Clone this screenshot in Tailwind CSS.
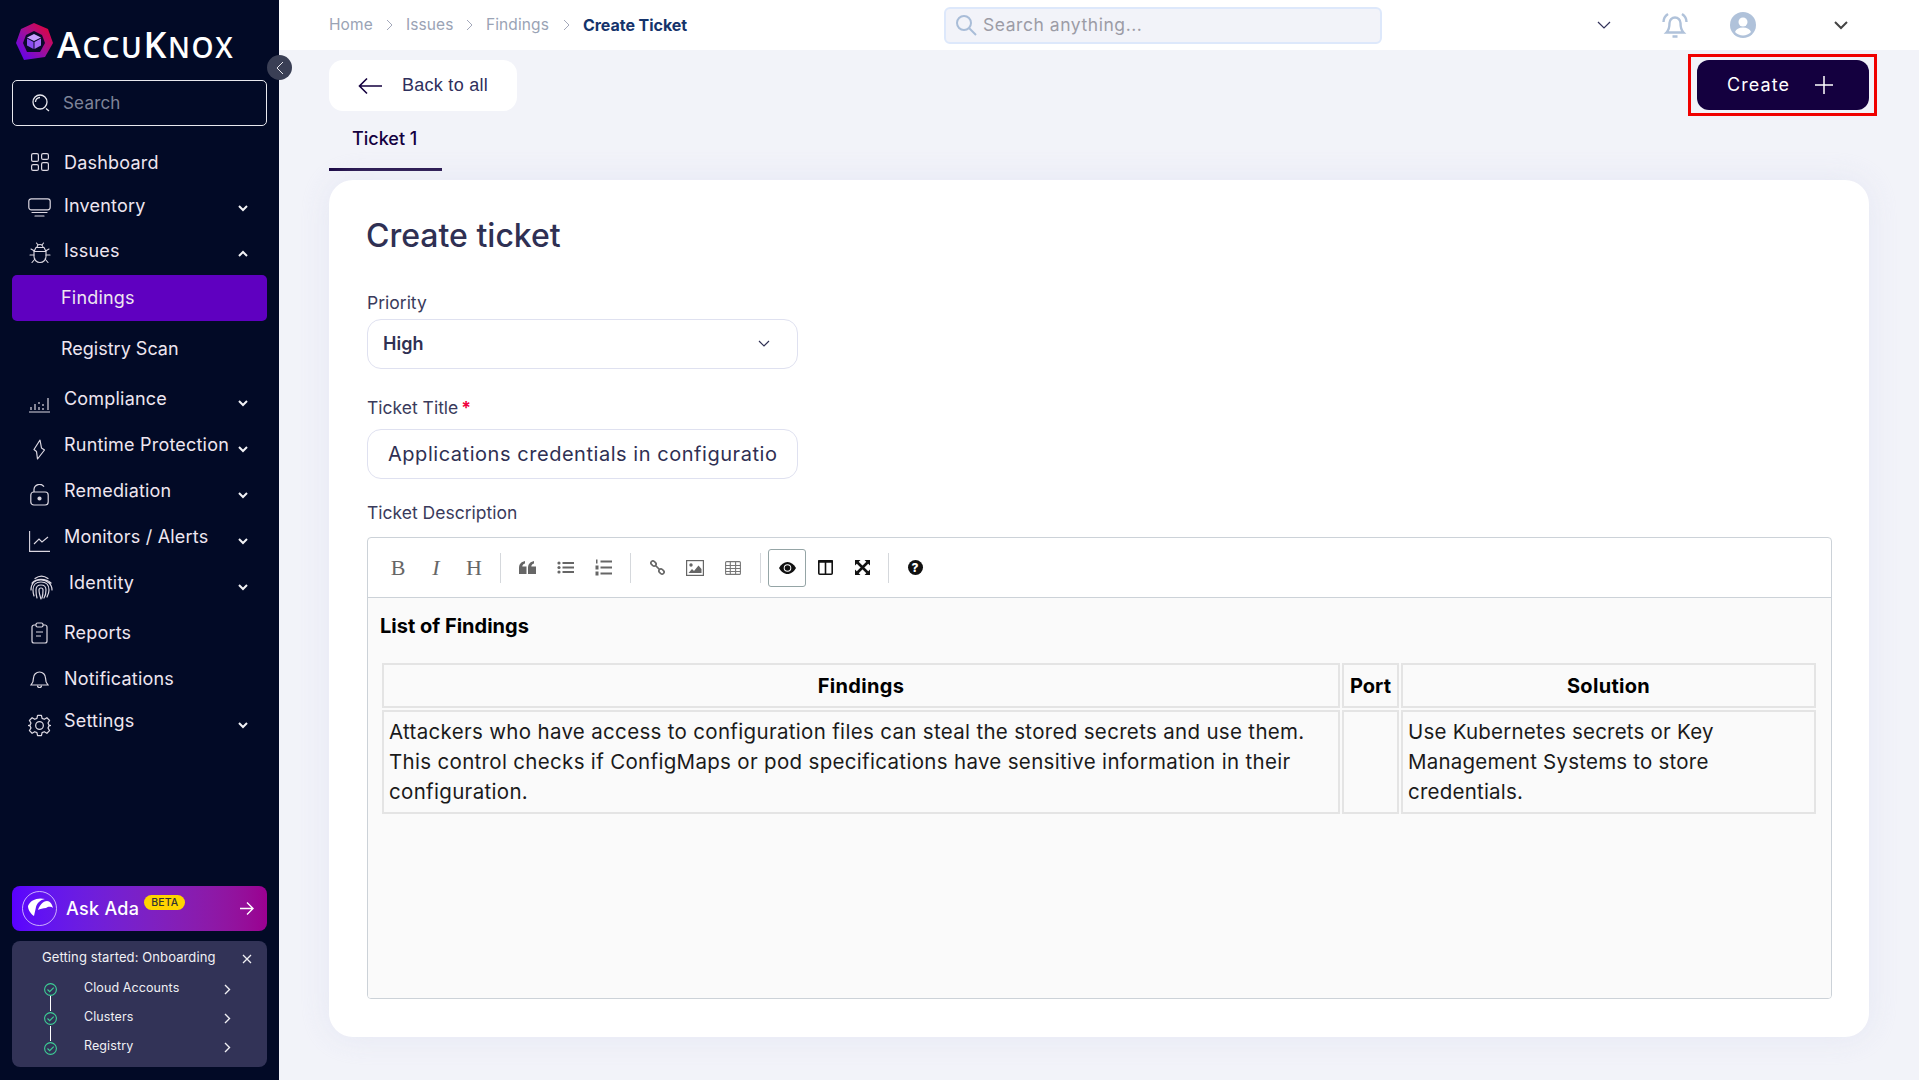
<!DOCTYPE html>
<html lang="en">
<head>
    <meta charset="UTF-8">
    <meta name="viewport" content="width=device-width, initial-scale=1.0">
    <script src="https://cdn.jsdelivr.net/npm/@tailwindcss/browser@4"></script>
    <title>Create Ticket</title>
</head>
<body class="font-['Inter',sans-serif] bg-[#f2f3f9]">
<div class="flex w-[1919px] h-[1080px] overflow-hidden relative">

    <!--sidebar-->
    <aside class="w-[279px] shrink-0 bg-[#020a26] flex flex-col px-[12px] pb-[13px] text-[#eee6f0] text-[18px] tracking-[0.2px]">
        <div class="h-[80px] flex items-start pt-[23px] pl-[3px] gap-[4px]">
            <svg width="38" height="38" viewBox="0 0 38 38">
                <defs>
                    <linearGradient id="ring" x1="1" y1="0" x2="0" y2="1">
                        <stop offset="0" stop-color="#f00020"/>
                        <stop offset="0.5" stop-color="#a0109a"/>
                        <stop offset="1" stop-color="#5200ff"/>
                    </linearGradient>
                </defs>
                <path d="M19 0L33 6L38 20L30 34L9 37L1 20L6 6Z" fill="url(#ring)"/>
                <path d="M19 8L27 12L30 20L25 29L12 29L8 20L11 12Z" fill="#0a0a2a"/>
                <path d="M19 11L26 14.500L19 18L12 14.500Z" fill="#c9a0ff"/>
                <path d="M12 15.500L18.500 19V26L12 22.500Z" fill="#8a4cf0"/>
                <path d="M26 15.500L19.500 19V26L26 22.500Z" fill="#a56cf5"/>
            </svg>
            <div class="text-white font-['Open_Sans',sans-serif] font-semibold tracking-[1.6px] leading-none mt-[4px] text-[28px] whitespace-nowrap"><span class="text-[36px]">A</span>CCU<span class="text-[36px]">K</span>NOX</div>
        </div>

        <div class="h-[46px] border border-[#e8e8ee] rounded-[5px] flex items-center pl-[18px] gap-[12px] shrink-0">
            <svg width="20" height="20" viewBox="0 0 20 20" fill="none" stroke="#e8e8ee" stroke-width="1.300"><circle cx="9" cy="9" r="7"/><path d="M4.500 9a4.500 4.500 0 0 1 4.500-4.500M15 15.500l3 2.500"/></svg>
            <span class="text-[#7f8499] text-[17px] pt-[1px]">Search</span>
        </div>

        <nav class="mt-[13px] flex flex-col">
            <a class="h-[46px] flex items-center">
                <span class="w-[52px] flex justify-center pl-[3px]">
                    <svg width="18" height="18" viewBox="0 0 18 18" fill="none" stroke="#dcd8e2" stroke-width="1.200"><rect x="0.600" y="0.600" width="6.800" height="7.800" rx="1.500"/><rect x="10.600" y="0.600" width="6.800" height="5.800" rx="1.500"/><rect x="0.600" y="11.600" width="6.800" height="5.800" rx="1.500"/><rect x="10.600" y="9.600" width="6.800" height="7.800" rx="1.500"/></svg>
                </span>
                <span>Dashboard</span>
            </a>
            <a class="h-[46px] flex items-center">
                <span class="w-[52px] flex justify-center pl-[3px]">
                    <svg width="23" height="20" viewBox="0 0 23 20" fill="none" stroke="#dcd8e2" stroke-width="1.200" stroke-linecap="round"><rect x="0.800" y="0.800" width="21.400" height="11" rx="2.500"/><path d="M4 14.500h15M7 18h9"/></svg>
                </span>
                <span class="pb-[6px]">Inventory</span>
                <svg class="ml-auto mr-[19px]" width="10" height="7" viewBox="0 0 10 7" fill="none" stroke="#f2f2f5" stroke-width="2"><path d="M1 1l4 4 4-4"/></svg>
            </a>
            <a class="h-[44px] flex items-center">
                <span class="w-[52px] flex justify-center pl-[3px]">
                    <svg width="22" height="22" viewBox="0 0 22 22" fill="none" stroke="#dcd8e2" stroke-width="1.100" stroke-linecap="round"><path d="M7 5.500h8l2 4v5a6 6 0 0 1-12 0v-5z"/><path d="M8 5.500a3 3 0 0 1 6 0M7.500 1l1.500 2M14.500 1L13 3M5.200 9.500h11.600M5 13H1M17 13h4M5.500 9L2 7M16.500 9L20 7M6 17l-3 3.500M16 17l3 3.500"/></svg>
                </span>
                <span class="pb-[6px]">Issues</span>
                <svg class="ml-auto mr-[19px]" width="10" height="7" viewBox="0 0 10 7" fill="none" stroke="#f2f2f5" stroke-width="2"><path d="M1 6l4-4 4 4"/></svg>
            </a>
            <a class="h-[46px] flex items-center bg-[#5f00c0] rounded-[5px] pl-[49px] pb-[2px]">Findings</a>
            <a class="h-[46px] mt-[4px] flex items-center pl-[49px] tracking-[0px]">Registry Scan</a>
            <a class="h-[46px] mt-[9px] flex items-center">
                <span class="w-[52px] flex justify-center pl-[3px]">
                    <svg width="21" height="20" viewBox="0 0 21 20" fill="none" stroke="#dcd8e2" stroke-width="1.200"><path d="M0 19h21M2 14v3M6 11v6M10 9v2M10 14v3M14 11v2M14 15v2M19 5v12"/></svg>
                </span>
                <span class="pb-[9px]">Compliance</span>
                <svg class="ml-auto mr-[19px]" width="10" height="7" viewBox="0 0 10 7" fill="none" stroke="#f2f2f5" stroke-width="2"><path d="M1 1l4 4 4-4"/></svg>
            </a>
            <a class="h-[46px] flex items-center">
                <span class="w-[52px] flex justify-center pl-[3px]">
                    <svg width="13" height="21" viewBox="0 0 13 21" fill="none" stroke="#dcd8e2" stroke-width="1.200" stroke-linejoin="round"><path d="M7 1L1 10.500l2.500 2 1 7.500 7-9-3-2z"/></svg>
                </span>
                <span class="pb-[9px]">Runtime Protection</span>
                <svg class="ml-auto mr-[19px]" width="10" height="7" viewBox="0 0 10 7" fill="none" stroke="#f2f2f5" stroke-width="2"><path d="M1 1l4 4 4-4"/></svg>
            </a>
            <a class="h-[46px] flex items-center">
                <span class="w-[52px] flex justify-center pl-[3px]">
                    <svg width="19" height="22" viewBox="0 0 19 22" fill="none" stroke="#dcd8e2" stroke-width="1.200"><rect x="0.800" y="8" width="17.400" height="13" rx="3"/><path d="M4 8V5.500a5.500 5.500 0 0 1 10-2.800"/><circle cx="9.500" cy="14.500" r="1.500" fill="#dcd8e2"/></svg>
                </span>
                <span class="pb-[9px]">Remediation</span>
                <svg class="ml-auto mr-[19px]" width="10" height="7" viewBox="0 0 10 7" fill="none" stroke="#f2f2f5" stroke-width="2"><path d="M1 1l4 4 4-4"/></svg>
            </a>
            <a class="h-[46px] flex items-center">
                <span class="w-[52px] flex justify-center pl-[3px]">
                    <svg width="21" height="21" viewBox="0 0 21 21" fill="none" stroke="#dcd8e2" stroke-width="1.100"><path d="M0.600 0v20.400H21M5 13l5-5 3 3 6-5"/></svg>
                </span>
                <span class="pb-[9px]">Monitors / Alerts</span>
                <svg class="ml-auto mr-[19px]" width="10" height="7" viewBox="0 0 10 7" fill="none" stroke="#f2f2f5" stroke-width="2"><path d="M1 1l4 4 4-4"/></svg>
            </a>
            <a class="h-[46px] flex items-center">
                <span class="w-[57px] flex justify-center pl-[2px]">
                    <svg width="23" height="25" viewBox="0 0 23 25" fill="none" stroke="#dcd8e2" stroke-width="1.200" stroke-linecap="round"><path d="M5 3.500C9 .5 14 .5 18 3.500M2 8c4-5 14-5 19 0M1 15c0-7 4-10 10-10s11 4 11 10M4 21c-1-3-1-4-1-6 0-5 3-8 8-8s8 3 8 8c0 3-1 5-2 7M7 23c-1-3-1-5-1-8 0-3 2-5 5-5s5 2 5 5c0 3 0 5-2 8M11 24c-1-3-2-6-2-9 0-1 1-2 2-2s2 1 2 2c0 3 0 5-1 8"/></svg>
                </span>
                <span class="pb-[9px]">Identity</span>
                <svg class="ml-auto mr-[19px]" width="10" height="7" viewBox="0 0 10 7" fill="none" stroke="#f2f2f5" stroke-width="2"><path d="M1 1l4 4 4-4"/></svg>
            </a>
            <a class="h-[46px] flex items-center">
                <span class="w-[52px] flex justify-center pl-[3px]">
                    <svg width="17" height="22" viewBox="0 0 17 22" fill="none" stroke="#dcd8e2" stroke-width="1.200"><path d="M5 3H3a2 2 0 0 0-2 2v14a2 2 0 0 0 2 2h11a2 2 0 0 0 2-2V5a2 2 0 0 0-2-2h-2"/><rect x="5" y="1" width="7" height="4" rx="1.500"/><path d="M5 10h7M5 14h5"/></svg>
                </span>
                <span class="pb-[2px]">Reports</span>
            </a>
            <a class="h-[46px] flex items-center">
                <span class="w-[52px] flex justify-center pl-[3px]">
                    <svg width="19" height="20" viewBox="0 0 19 20" fill="none" stroke="#dcd8e2" stroke-width="1.200"><path d="M1 16c2-2 2.500-4 2.500-7a6 6 0 0 1 12 0c0 3 .5 5 2.500 7z"/><path d="M7.500 16.500a2 2 0 0 0 4 0"/></svg>
                </span>
                <span class="pb-[2px]">Notifications</span>
            </a>
            <a class="h-[46px] flex items-center">
                <span class="w-[52px] flex justify-center pl-[3px]">
                    <svg width="23" height="23" viewBox="0 0 24 24" fill="none" stroke="#dcd8e2" stroke-width="1.300" stroke-linejoin="round"><path d="M10 1.500h4l.7 3 2.300 1 2.700-1.600 2.800 2.800L20.900 9.400l1 2.300 2 .3v0l-2 .3-1 2.300 1.600 2.700-2.800 2.800-2.700-1.600-2.300 1-.7 3h-4l-.7-3-2.300-1-2.700 1.600-2.800-2.800 1.600-2.700-1-2.300-2-.3v0l2-.3 1-2.300L1.500 6.700l2.800-2.800L7 5.500l2.300-1z"/><circle cx="12" cy="12" r="4"/></svg>
                </span>
                <span class="pb-[9px]">Settings</span>
                <svg class="ml-auto mr-[19px]" width="10" height="7" viewBox="0 0 10 7" fill="none" stroke="#f2f2f5" stroke-width="2"><path d="M1 1l4 4 4-4"/></svg>
            </a>
        </nav>

        <div class="mt-auto h-[45px] rounded-[8px] bg-gradient-to-r from-[#5a00ff] to-[#9a0090] flex items-center pl-[10px] pr-[13px] shrink-0">
            <svg width="35" height="35" viewBox="0 0 35 35" fill="none">
                <circle cx="17.500" cy="17.500" r="17" stroke="#e6d8ff" stroke-width="0.800"/>
                <path d="M6 15c2-6 10-9 17-7-5 1-8 4-9 8l-2 9c-3-2-6-6-6-10z" fill="#fff"/>
                <path d="M16 19c1-4 5-9 9-9 3 0 5 3 6 7-3-2-5-1-7 0-3 0-6 1-8 2z" fill="#fff"/>
            </svg>
            <span class="ml-[9px] text-white text-[18px] font-medium tracking-[0.3px]">Ask Ada</span>
            <span class="ml-[5px] -mt-[12px] h-[15px] px-[7px] rounded-full bg-[#ffd400] text-[#333] text-[10.500px] font-medium leading-[15px] tracking-[0.1px]">BETA</span>
            <svg class="ml-auto" width="15" height="15" viewBox="0 0 15 15" fill="none" stroke="#fff" stroke-width="1.400"><path d="M1 7.500h13M8 1.500l6 6-6 6"/></svg>
        </div>

        <div class="mt-[10px] h-[126px] shrink-0 rounded-[8px] bg-[#323357] pl-[30px] pt-[7px] text-[12.500px] tracking-[0.1px] text-[#f0f0f4]">
            <div class="flex items-center h-[20px] pr-[15px]">
                <span class="text-[13px]">Getting started: Onboarding</span>
                <svg class="ml-auto mt-[2px]" width="10" height="10" viewBox="0 0 10 10" stroke="#f0f0f4" stroke-width="1.300"><path d="M1 1l8 8M9 1l-8 8"/></svg>
            </div>
            <div class="mt-[5px]">
                <div class="h-[30px] flex items-center pl-[2px] relative">
                    <svg class="shrink-0 mt-[2px]" width="13" height="13" viewBox="0 0 13 13" fill="none" stroke="#3dcf96" stroke-width="1.100"><circle cx="6.500" cy="6.500" r="5.900"/><path d="M3.500 6.500l2.200 2.200 4-4"/></svg>
                    <span class="ml-[27px]">Cloud Accounts</span>
                    <svg class="ml-auto mr-[36px] mt-[2px]" width="7" height="11" viewBox="0 0 7 11" fill="none" stroke="#f0f0f4" stroke-width="1.400"><path d="M1 1l4.500 4.500L1 10"/></svg>
                    <i class="absolute left-[8px] top-[23px] w-[1px] h-[15px] bg-white"></i>
                </div>
                <div class="h-[29px] flex items-center pl-[2px] relative">
                    <svg class="shrink-0 mt-[2px]" width="13" height="13" viewBox="0 0 13 13" fill="none" stroke="#3dcf96" stroke-width="1.100"><circle cx="6.500" cy="6.500" r="5.900"/><path d="M3.500 6.500l2.200 2.200 4-4"/></svg>
                    <span class="ml-[27px]">Clusters</span>
                    <svg class="ml-auto mr-[36px] mt-[2px]" width="7" height="11" viewBox="0 0 7 11" fill="none" stroke="#f0f0f4" stroke-width="1.400"><path d="M1 1l4.500 4.500L1 10"/></svg>
                    <i class="absolute left-[8px] top-[23px] w-[1px] h-[15px] bg-white"></i>
                </div>
                <div class="h-[29px] flex items-center pl-[2px]">
                    <svg class="shrink-0 mt-[4px]" width="13" height="13" viewBox="0 0 13 13" fill="none" stroke="#3dcf96" stroke-width="1.100"><circle cx="6.500" cy="6.500" r="5.900"/><path d="M3.500 6.500l2.200 2.200 4-4"/></svg>
                    <span class="ml-[27px]">Registry</span>
                    <svg class="ml-auto mr-[36px] mt-[2px]" width="7" height="11" viewBox="0 0 7 11" fill="none" stroke="#f0f0f4" stroke-width="1.400"><path d="M1 1l4.500 4.500L1 10"/></svg>
                </div>
            </div>
        </div>
    </aside>

    <!--tombol collapse-->
    <div class="absolute left-[267px] top-[55px] w-[25px] h-[25px] rounded-full bg-[#3a3f55] flex items-center justify-center">
        <svg width="8" height="14" viewBox="0 0 8 14" fill="none" stroke="#e8e8ee" stroke-width="1"><path d="M7 1L1 7l6 6"/></svg>
    </div>

    <div class="flex-1 flex flex-col">
        <!--header-->
        <header class="h-[50px] shrink-0 bg-white flex items-center">
            <div class="w-[665px] pl-[50px] flex items-center text-[15.500px] text-[#9aa3b5] tracking-[0.1px]">
                <span class="w-[45px]">Home</span>
                <svg class="mx-[12px]" width="8" height="12" viewBox="0 0 8 12" fill="none" stroke="#a3a8ba" stroke-width="1"><path d="M1 1l5 5-5 5"/></svg>
                <span class="w-[48px]">Issues</span>
                <svg class="mx-[12px]" width="8" height="12" viewBox="0 0 8 12" fill="none" stroke="#a3a8ba" stroke-width="1"><path d="M1 1l5 5-5 5"/></svg>
                <span class="w-[65px]">Findings</span>
                <svg class="mx-[12px]" width="8" height="12" viewBox="0 0 8 12" fill="none" stroke="#a3a8ba" stroke-width="1"><path d="M1 1l5 5-5 5"/></svg>
                <span class="font-bold text-[16px] text-[#14336b] -tracking-[0.05px]">Create Ticket</span>
            </div>
            <div class="w-[438px] h-[37px] rounded-[6px] border-2 border-[#dde8fb] bg-[#f2f3f9] flex items-center pl-[9px] gap-[6px]">
                <svg width="22" height="22" viewBox="0 0 22 22" fill="none" stroke="#a9bdd8" stroke-width="2"><circle cx="9" cy="9" r="7"/><path d="M14 14l7 7"/></svg>
                <span class="text-[17.500px] text-[#9c9ca6] tracking-[0.55px]">Search anything...</span>
            </div>
            <svg class="ml-[215px]" width="14" height="8" viewBox="0 0 14 8" fill="none" stroke="#32325a" stroke-width="1.200"><path d="M1 1l6 6 6-6"/></svg>
            <svg class="ml-[51px]" width="26" height="26" viewBox="0 0 26 26" fill="none" stroke="#b0c2da" stroke-width="2.400"><path d="M4.500 20.500c2-2 3-4 3-9.500a5.500 5.500 0 0 1 11 0c0 5.500 1 7.500 3 9.500z"/><path d="M6 2C3 4 1.500 7 1.500 10M20 2c3 2 4.500 5 4.500 8M10.500 24.500h5"/></svg>
            <svg class="ml-[42px]" width="26" height="26" viewBox="0 0 26 26"><circle cx="13" cy="13" r="13" fill="#b0c2da"/><circle cx="13" cy="10" r="4.500" fill="#fff"/><path d="M5 20c1-3 4-4.500 8-4.500s7 1.500 8 4.500c-2 2-5 3.500-8 3.500s-6-1.500-8-3.500z" fill="#fff"/></svg>
            <svg class="ml-[78px]" width="14" height="9" viewBox="0 0 14 9" fill="none" stroke="#444" stroke-width="2"><path d="M1 1l6 6 6-6"/></svg>
        </header>

        <main class="flex-1 px-[50px] pt-[10px] relative">
            <div class="flex items-start justify-between">
                <div class="w-[188px] h-[51px] bg-white rounded-[14px] flex items-center pl-[29px] font-['Liberation_Sans',sans-serif] text-[18px] tracking-[0.27px] text-[#2f2f5c]">
                    <svg width="24" height="18" viewBox="0 0 24 18" fill="none" stroke="#14003f" stroke-width="1.600"><path d="M24 9H1.500M9 1.500L1.500 9 9 16.500"/></svg>
                    <span class="ml-[20px]">Back to all</span>
                </div>
                <div class="w-[172px] h-[50px] rounded-[12px] bg-[#14003f] flex items-center pl-[30px] text-white text-[18px] tracking-[1.1px]">
                    <span class="pb-[2px]">Create</span>
                    <svg class="ml-[25px]" width="18" height="18" viewBox="0 0 18 18" stroke="#fff" stroke-width="1.500"><path d="M9 0v18M0 9h18"/></svg>
                </div>
            </div>
            <div class="absolute left-[1409px] top-[4px] w-[189px] h-[62px] border-[3px] border-[#f00000]"></div>

            <div class="w-[113px] h-[60px] border-b-[3px] border-[#14003f] pl-[23px] pt-[14px] text-[18px] font-medium tracking-[0px] text-[#14003f]">Ticket 1</div>

            <!--form-->
            <section class="mt-[9px] h-[857px] bg-white rounded-[24px] pl-[38px] pr-[37px] pt-[36px] shadow-[0_0_30px_rgba(220,224,240,0.6)] text-[#2f3053]">
                <h1 class="text-[32px] leading-[40px] font-medium -ml-[1px]">Create ticket</h1>
                <label class="block mt-[35px] h-[24px] leading-[24px] text-[17.500px] text-[#3a3b5c]">Priority</label>
                <div class="mt-[4px] w-[431px] h-[50px] rounded-[14px] border-[1.500px] border-[#dfe1f0] flex items-center pl-[15px] pr-[27px]">
                    <span class="text-[18px] font-semibold pb-[2px]">High</span>
                    <svg class="ml-auto" width="12" height="8" viewBox="0 0 12 8" fill="none" stroke="#2f3053" stroke-width="1.200"><path d="M1 1l5 5 5-5"/></svg>
                </div>
                <label class="block mt-[27px] h-[24px] leading-[24px] text-[17.500px] text-[#3a3b5c]">Ticket Title <span class="text-[#f0003c] font-bold -ml-[2px]">*</span></label>
                <div class="mt-[9px] w-[431px] h-[50px] rounded-[14px] border-[1.500px] border-[#dfe1f0] flex items-center pl-[20px] pr-[15px]">
                    <div class="whitespace-nowrap text-[20px] tracking-[0.54px]">Applications credentials in configuratio</div>
                </div>
                <label class="block mt-[22px] h-[24px] leading-[24px] text-[17.500px] text-[#3a3b5c]">Ticket Description</label>

                <div class="mt-[12px] h-[462px] rounded-[4px] border border-[#ccd2d8] flex flex-col overflow-hidden">
                    <div class="h-[60px] shrink-0 border-b border-[#ccd2d8] flex items-center pl-[11px] text-[#666]">
                        <span class="w-[38px] text-center font-['Liberation_Serif',serif] text-[22px]">B</span>
                        <span class="w-[38px] text-center font-['Liberation_Serif',serif] italic text-[22px]">I</span>
                        <span class="w-[38px] text-center font-['Liberation_Serif',serif] text-[22px]">H</span>
                        <span class="w-[15px] flex justify-center"><i class="block w-[1px] h-[30px] bg-[#d5d8dc]"></i></span>
                        <span class="w-[38px] flex justify-center">
                            <svg width="17" height="13" viewBox="0 0 17 13" fill="#666"><path d="M0 7c0-4 2-6 6-7v2.500C4 3 3.500 4 3.300 5.500H7.500V13H0zM9 7c0-4 2-6 6-7v2.500c-2 .5-2.500 1.500-2.700 3H17V13H9z"/></svg>
                        </span>
                        <span class="w-[38px] flex justify-center">
                            <svg width="17" height="13" viewBox="0 0 17 13" fill="#666"><circle cx="2" cy="2" r="1.600"/><circle cx="2" cy="6.500" r="1.600"/><circle cx="2" cy="11" r="1.600"/><rect x="5.500" y="1" width="11.500" height="2"/><rect x="5.500" y="5.500" width="11.500" height="2"/><rect x="5.500" y="10" width="11.500" height="2"/></svg>
                        </span>
                        <span class="w-[38px] flex justify-center">
                            <svg width="17" height="17" viewBox="0 0 17 17" fill="#666"><rect x="1" y="0.500" width="1.500" height="4"/><rect x="0.500" y="6.500" width="3" height="4"/><rect x="0.500" y="12.500" width="3" height="4"/><rect x="5.500" y="1.500" width="11.500" height="2"/><rect x="5.500" y="7.500" width="11.500" height="2"/><rect x="5.500" y="13.500" width="11.500" height="2"/></svg>
                        </span>
                        <span class="w-[16px] flex justify-center"><i class="block w-[1px] h-[30px] bg-[#d5d8dc]"></i></span>
                        <span class="w-[38px] flex justify-center">
                            <svg width="17" height="17" viewBox="0 0 17 17" fill="none" stroke="#666" stroke-width="1.700"><rect x="-2.800" y="-2" width="5.600" height="4" rx="2" transform="translate(4.500 4.500) rotate(45)"/><rect x="-2.800" y="-2" width="5.600" height="4" rx="2" transform="translate(12.500 12.500) rotate(45)"/><path d="M6.500 6.500l4 4"/></svg>
                        </span>
                        <span class="w-[38px] flex justify-center">
                            <svg width="18" height="16" viewBox="0 0 18 16"><rect x="0.600" y="0.600" width="16.800" height="14.800" fill="none" stroke="#666" stroke-width="1.200"/><circle cx="5" cy="5" r="1.700" fill="#666"/><path d="M2.500 13l3.500-4 2 2 4.500-5.500 3 3.500v4z" fill="#666"/></svg>
                        </span>
                        <span class="w-[38px] flex justify-center">
                            <svg width="16" height="14" viewBox="0 0 16 14" fill="none" stroke="#777" stroke-width="1.100"><rect x="0.600" y="0.600" width="14.800" height="12.800" rx="1"/><path d="M0 4.500h16M0 7.500h16M0 10.500h16M5.300 1v12M10.600 1v12"/></svg>
                        </span>
                        <span class="w-[16px] flex justify-center"><i class="block w-[1px] h-[30px] bg-[#d5d8dc]"></i></span>
                        <span class="w-[38px] h-[38px] rounded-[3px] border border-[#95a5a6] flex items-center justify-center">
                            <svg width="17" height="12" viewBox="0 0 17 12"><path d="M0 6c2-3.500 5-6 8.500-6S15 2.500 17 6c-2 3.500-5 6-8.500 6S2 9.500 0 6z" fill="#111"/><circle cx="8.500" cy="6" r="3.800" fill="#fff"/><circle cx="8.500" cy="6" r="2.800" fill="#111"/></svg>
                        </span>
                        <span class="w-[38px] flex justify-center">
                            <svg width="15" height="15" viewBox="0 0 15 15" fill="none" stroke="#111" stroke-width="1.600"><rect x="0.800" y="0.800" width="13.400" height="13.400" rx="1"/><path d="M7.500 1v13"/><path d="M0 1.500h15" stroke-width="2.500"/></svg>
                        </span>
                        <span class="w-[37px] flex justify-center">
                            <svg width="15" height="15" viewBox="0 0 15 15"><path d="M0 0h5.500L0 5.500zM15 0v5.500L9.500 0zM0 15V9.500L5.500 15zM15 15H9.500L15 9.500z" fill="#111"/><path d="M2.500 2.500l10 10M12.500 2.500l-10 10" stroke="#111" stroke-width="2.600"/></svg>
                        </span>
                        <span class="w-[15px] flex justify-center"><i class="block w-[1px] h-[30px] bg-[#d5d8dc]"></i></span>
                        <span class="w-[38px] flex justify-center">
                            <span class="w-[15px] h-[15px] rounded-full bg-[#111] text-white text-[12px] font-extrabold leading-[15px] text-center">?</span>
                        </span>
                    </div>

                    <div class="flex-1 bg-[#fafafa] pl-[12px] pt-[14px] text-black">
                        <p class="h-[28px] leading-[28px] text-[20px] font-bold">List of Findings</p>
                        <table class="mt-[21px] w-[1438px] table-fixed border-separate border-spacing-[2px]">
                            <colgroup><col class="w-[958px]"><col class="w-[57px]"><col class="w-[415px]"></colgroup>
                            <tr class="h-[45px]">
                                <th class="border-2 border-[#e4e4e4] text-[20px] font-bold tracking-[0.3px]">Findings</th>
                                <th class="border-2 border-[#e4e4e4] text-[20px] font-bold">Port</th>
                                <th class="border-2 border-[#e4e4e4] text-[20px] font-bold tracking-[0.3px]">Solution</th>
                            </tr>
                            <tr class="h-[104px]">
                                <td class="border-2 border-[#e4e4e4] px-[5px] text-[20.500px] leading-[30px] tracking-[0.32px] font-normal text-[#1a1a1a] align-middle">Attackers who have access to configuration files can steal the stored secrets and use them.<br>This control checks if ConfigMaps or pod specifications have sensitive information in their<br>configuration.</td>
                                <td class="border-2 border-[#e4e4e4]"></td>
                                <td class="border-2 border-[#e4e4e4] px-[5px] text-[20.500px] leading-[30px] tracking-[0.22px] text-[#1a1a1a] align-middle">Use Kubernetes secrets or Key<br>Management Systems to store<br>credentials.</td>
                            </tr>
                        </table>
                    </div>
                </div>
            </section>
        </main>
    </div>
</div>
</body>
</html>
